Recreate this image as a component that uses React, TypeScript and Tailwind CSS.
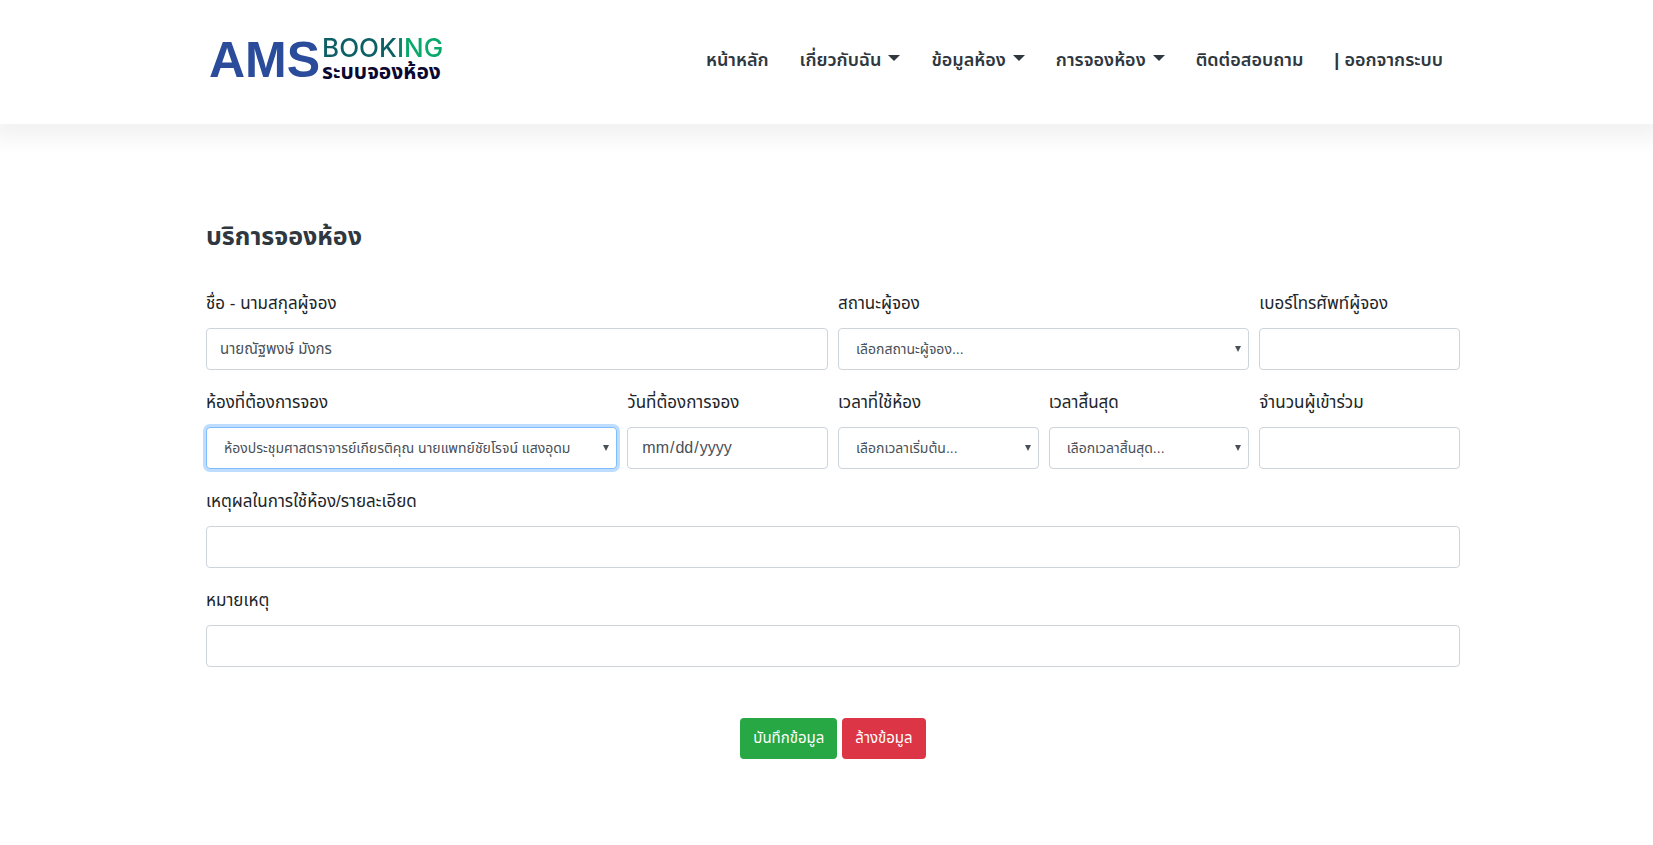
import React from "react";

type NavItem = { label: string; menu?: boolean };

const navItems: NavItem[] = [
  { label: "หน้าหลัก" },
  { label: "เกี่ยวกับฉัน", menu: true },
  { label: "ข้อมูลห้อง", menu: true },
  { label: "การจองห้อง", menu: true },
  { label: "ติดต่อสอบถาม" },
  { label: "| ออกจากระบบ" },
];

const control = "block h-[42px] w-full min-w-0 rounded border bg-white text-[#495057] outline-none";

function Field({ id, label, span, children }: { id: string; label: string; span: string; children: React.ReactNode }) {
  return (
    <div className={span}>
      <label htmlFor={id} className="mb-2 block whitespace-nowrap text-[17px] leading-[33px] text-[#212529]">
        {label}
      </label>
      {children}
    </div>
  );
}

function TextField({ id, label, span, value }: { id: string; label: string; span: string; value?: string }) {
  return (
    <Field id={id} label={label} span={span}>
      <input id={id} type="text" defaultValue={value} className={`${control} border-[#ced4da] px-[13px] text-[15px]`} />
    </Field>
  );
}

function SelectField({ id, label, span, option, active }: { id: string; label: string; span: string; option: string; active?: boolean }) {
  return (
    <Field id={id} label={label} span={span}>
      <div className="relative">
        <select
          id={id}
          className={`${control} appearance-none pl-[17px] pr-5 text-sm ${active ? "border-[#80bdff] ring-[3px] ring-[#bfdeff]" : "border-[#ced4da]"}`}
        >
          <option>{option}</option>
        </select>
        <svg viewBox="0 0 6 6" className="pointer-events-none absolute right-2 top-[18px] h-1.5 w-1.5 fill-[#495057]" aria-hidden="true">
          <path d="M0 0h6L3 6z" />
        </svg>
      </div>
    </Field>
  );
}

export default function App() {
  return (
    <div className="min-h-screen overflow-x-hidden bg-white font-['Liberation_Sans','Noto_Sans_Thai',sans-serif]">
      <header className="bg-white px-[193px] pb-1 shadow-[0_8px_18px_8px_rgba(0,0,0,0.05)]">
        <div className="mx-auto flex h-[120px] max-w-[1267px] items-center justify-between pl-4">
          <a href="#" className="flex items-center gap-0.5">
            <span className="text-[50px] font-bold leading-10 text-[#2b4c9b]">AMS</span>
            <span className="flex flex-col">
              <span className="bg-linear-to-r from-[#0d5f66] from-60% to-[#08a86b] to-70% bg-clip-text font-['Inter',sans-serif] text-[26px] font-medium leading-6 text-transparent">
                BOOKING
              </span>
              <span className="text-[21px] font-bold leading-6 text-[#0a0832]">ระบบจองห้อง</span>
            </span>
          </a>
          <nav className="flex gap-[31px] pr-[17px]">
            {navItems.map((n) => (
              <a key={n.label} href="#" className="flex items-center gap-[7px] whitespace-nowrap text-[18px] font-semibold leading-8 text-[#2f373f]">
                {n.label}
                {n.menu && (
                  <svg viewBox="0 0 12 6" className="mb-1 h-1.5 w-3 fill-current" aria-hidden="true">
                    <path d="M0 0h12L6 6z" />
                  </svg>
                )}
              </a>
            ))}
          </nav>
        </div>
      </header>
      <main className="px-[193px] pt-[92px]">
        <form className="mx-auto max-w-[1267px] pl-[13px]">
          <h1 className="mb-[31px] text-[25px] font-bold leading-10 text-[#2f373f]">บริการจองห้อง</h1>
          <div className="grid grid-cols-6 gap-x-2.5 gap-y-4">
            <TextField id="name" label="ชื่อ - นามสกุลผู้จอง" span="col-span-3" value="นายณัฐพงษ์ มังกร" />
            <SelectField id="status" label="สถานะผู้จอง" span="col-span-2" option="เลือกสถานะผู้จอง..." />
            <TextField id="phone" label="เบอร์โทรศัพท์ผู้จอง" span="col-span-1" />
            <SelectField id="room" label="ห้องที่ต้องการจอง" span="col-span-2" option="ห้องประชุมศาสตราจารย์เกียรติคุณ นายแพทย์ชัยโรจน์ แสงอุดม" active />
            <Field id="date" label="วันที่ต้องการจอง" span="col-span-1">
              <input id="date" type="date" className={`${control} border-[#ced4da] px-[13px] text-base [&::-webkit-calendar-picker-indicator]:hidden`} />
            </Field>
            <SelectField id="start" label="เวลาที่ใช้ห้อง" span="col-span-1" option="เลือกเวลาเริ่มต้น..." />
            <SelectField id="end" label="เวลาสิ้นสุด" span="col-span-1" option="เลือกเวลาสิ้นสุด..." />
            <TextField id="people" label="จำนวนผู้เข้าร่วม" span="col-span-1" />
            <TextField id="reason" label="เหตุผลในการใช้ห้อง/รายละเอียด" span="col-span-6" />
            <TextField id="note" label="หมายเหตุ" span="col-span-6" />
          </div>
          <div className="mt-[51px] flex justify-center gap-[5px]">
            <button type="submit" className="h-[41px] rounded bg-[#28a745] px-[13px] text-[15px] text-white">บันทึกข้อมูล</button>
            <button type="reset" className="h-[41px] rounded bg-[#dc3545] px-[13px] text-[15px] text-white">ล้างข้อมูล</button>
          </div>
        </form>
      </main>
    </div>
  );
}
